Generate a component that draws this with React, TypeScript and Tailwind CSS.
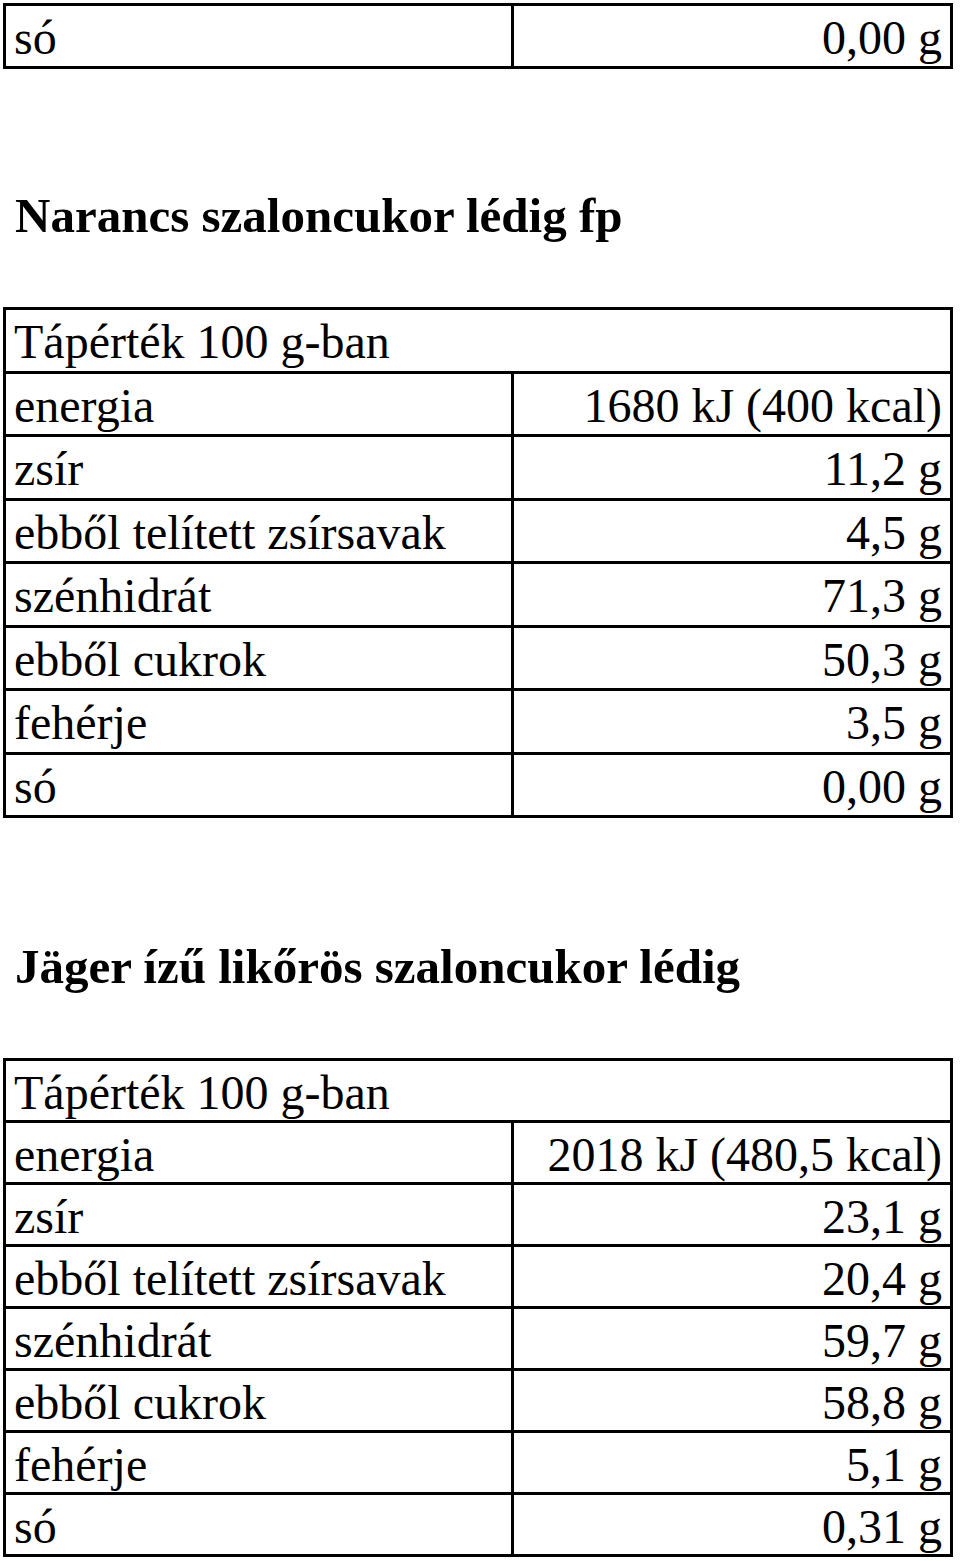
const serif = { fontFamily: '"Liberation Serif", "Times New Roman", serif' };

type Row = [string, string];

const narancs: Row[] = [
  ['energia', '1680 kJ (400 kcal)'],
  ['zsír', '11,2 g'],
  ['ebből telített zsírsavak', '4,5 g'],
  ['szénhidrát', '71,3 g'],
  ['ebből cukrok', '50,3 g'],
  ['fehérje', '3,5 g'],
  ['só', '0,00 g'],
];

const jager: Row[] = [
  ['energia', '2018 kJ (480,5 kcal)'],
  ['zsír', '23,1 g'],
  ['ebből telített zsírsavak', '20,4 g'],
  ['szénhidrát', '59,7 g'],
  ['ebből cukrok', '58,8 g'],
  ['fehérje', '5,1 g'],
  ['só', '0,31 g'],
];

function NutritionTable({ rows, header, rowH }: { rows: Row[]; header?: boolean; rowH: string }) {
  return (
    <table className="w-[950px] border-collapse border-[3px] border-black table-fixed">
      <colgroup>
        <col className="w-[508px]" />
        <col />
      </colgroup>
      <tbody>
        {header && (
          <tr className={rowH}>
            <td colSpan={2} className="border-[3px] border-black pl-[8px] pt-[4px] leading-none align-middle">
              Tápérték 100 g-ban
            </td>
          </tr>
        )}
        {rows.map(([label, value]) => (
          <tr key={label} className={rowH}>
            <td className="border-[3px] border-black pl-[8px] pt-[4px] leading-none align-middle whitespace-nowrap">
              {label}
            </td>
            <td className="border-[3px] border-black pl-2 pr-[8px] pt-[4px] text-right leading-none align-middle whitespace-nowrap">
              {value}
            </td>
          </tr>
        ))}
      </tbody>
    </table>
  );
}

export default function App() {
  return (
    <div className="w-[960px] h-[1561px] bg-white text-black text-[48px] px-[3px] pt-[3px]" style={serif}>
      <NutritionTable rows={[['só', '0,00 g']]} rowH="h-[63px]" />

      <h2 className="font-bold text-[49px] h-[238px] flex items-center pl-[12px] pt-[54px] leading-none">
        Narancs szaloncukor lédig fp
      </h2>

      <NutritionTable rows={narancs} header rowH="h-[63.5px]" />

      <h2 className="font-bold text-[49px] h-[240px] flex items-center pl-[12px] pt-[56px] leading-none">
        Jäger ízű likőrös szaloncukor lédig
      </h2>

      <NutritionTable rows={jager} header rowH="h-[62px]" />
    </div>
  );
}
